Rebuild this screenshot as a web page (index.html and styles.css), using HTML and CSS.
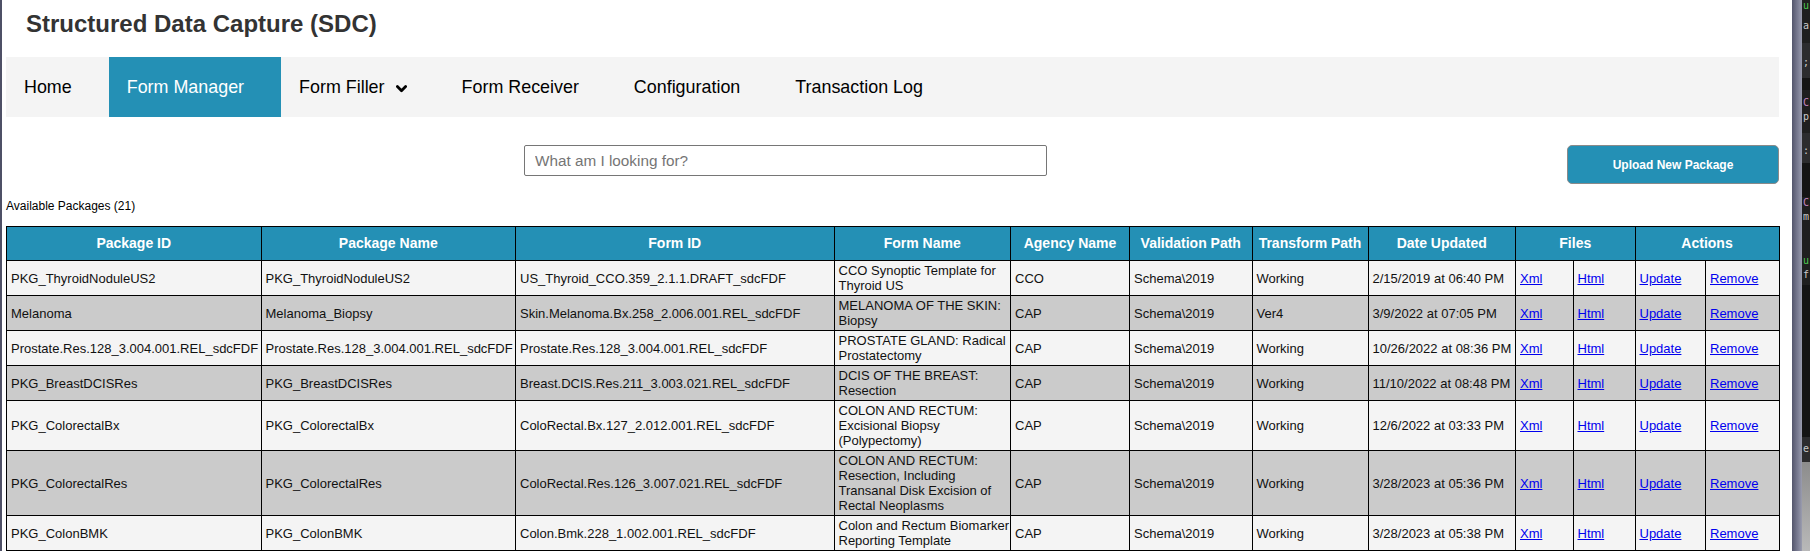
FILE: index.html
```html
<!DOCTYPE html>
<html lang="en">
<head>
<meta charset="utf-8">
<title>Structured Data Capture (SDC)</title>
<link rel="stylesheet" href="styles.css">
</head>
<body>
<div class="screen">
  <div class="edge"></div>
  <div class="page">
    <h1 class="title">Structured Data Capture (SDC)</h1>
    <nav class="nav">
      <a class="nav-item">Home</a>
      <a class="nav-item active">Form Manager</a>
      <a class="nav-item">Form Filler
        <svg class="chev" width="11" height="8" viewBox="0 0 11 8"><polyline points="1.4,1.6 5.5,5.7 9.6,1.6" fill="none" stroke="#000" stroke-width="2.8" stroke-linecap="round" stroke-linejoin="round"/></svg>
      </a>
      <a class="nav-item">Form Receiver</a>
      <a class="nav-item">Configuration</a>
      <a class="nav-item">Transaction Log</a>
    </nav>
    <div class="toolbar">
      <input class="search" type="text" placeholder="What am I looking for?">
      <button class="upload" type="button">Upload New Package</button>
    </div>
    <div class="count">Available Packages (21)</div>
    <table class="packages">
      <colgroup>
        <col class="c-pid"><col class="c-pname"><col class="c-fid"><col class="c-fname">
        <col class="c-agency"><col class="c-valid"><col class="c-trans"><col class="c-date">
        <col class="c-xml"><col class="c-html"><col class="c-upd"><col class="c-rem">
      </colgroup>
      <thead>
        <tr>
          <th>Package ID</th><th>Package Name</th><th>Form ID</th><th>Form Name</th>
          <th>Agency Name</th><th>Validation Path</th><th>Transform Path</th><th>Date Updated</th>
          <th colspan="2">Files</th><th colspan="2">Actions</th>
        </tr>
      </thead>
      <tbody>
        <tr>
          <td>PKG_ThyroidNoduleUS2</td><td>PKG_ThyroidNoduleUS2</td><td>US_Thyroid_CCO.359_2.1.1.DRAFT_sdcFDF</td>
          <td class="fname">CCO Synoptic Template for<br>Thyroid US</td><td>CCO</td><td>Schema\2019</td><td>Working</td><td>2/15/2019 at 06:40 PM</td>
          <td><a href="#">Xml</a></td><td><a href="#">Html</a></td><td><a href="#">Update</a></td><td><a href="#">Remove</a></td>
        </tr>
        <tr>
          <td>Melanoma</td><td>Melanoma_Biopsy</td><td>Skin.Melanoma.Bx.258_2.006.001.REL_sdcFDF</td>
          <td class="fname">MELANOMA OF THE SKIN:<br>Biopsy</td><td>CAP</td><td>Schema\2019</td><td>Ver4</td><td>3/9/2022 at 07:05 PM</td>
          <td><a href="#">Xml</a></td><td><a href="#">Html</a></td><td><a href="#">Update</a></td><td><a href="#">Remove</a></td>
        </tr>
        <tr>
          <td>Prostate.Res.128_3.004.001.REL_sdcFDF</td><td>Prostate.Res.128_3.004.001.REL_sdcFDF</td><td>Prostate.Res.128_3.004.001.REL_sdcFDF</td>
          <td class="fname">PROSTATE GLAND: Radical<br>Prostatectomy</td><td>CAP</td><td>Schema\2019</td><td>Working</td><td>10/26/2022 at 08:36 PM</td>
          <td><a href="#">Xml</a></td><td><a href="#">Html</a></td><td><a href="#">Update</a></td><td><a href="#">Remove</a></td>
        </tr>
        <tr>
          <td>PKG_BreastDCISRes</td><td>PKG_BreastDCISRes</td><td>Breast.DCIS.Res.211_3.003.021.REL_sdcFDF</td>
          <td class="fname">DCIS OF THE BREAST:<br>Resection</td><td>CAP</td><td>Schema\2019</td><td>Working</td><td>11/10/2022 at 08:48 PM</td>
          <td><a href="#">Xml</a></td><td><a href="#">Html</a></td><td><a href="#">Update</a></td><td><a href="#">Remove</a></td>
        </tr>
        <tr>
          <td>PKG_ColorectalBx</td><td>PKG_ColorectalBx</td><td>ColoRectal.Bx.127_2.012.001.REL_sdcFDF</td>
          <td class="fname">COLON AND RECTUM:<br>Excisional Biopsy<br>(Polypectomy)</td><td>CAP</td><td>Schema\2019</td><td>Working</td><td>12/6/2022 at 03:33 PM</td>
          <td><a href="#">Xml</a></td><td><a href="#">Html</a></td><td><a href="#">Update</a></td><td><a href="#">Remove</a></td>
        </tr>
        <tr>
          <td>PKG_ColorectalRes</td><td>PKG_ColorectalRes</td><td>ColoRectal.Res.126_3.007.021.REL_sdcFDF</td>
          <td class="fname">COLON AND RECTUM:<br>Resection, Including<br>Transanal Disk Excision of<br>Rectal Neoplasms</td><td>CAP</td><td>Schema\2019</td><td>Working</td><td>3/28/2023 at 05:36 PM</td>
          <td><a href="#">Xml</a></td><td><a href="#">Html</a></td><td><a href="#">Update</a></td><td><a href="#">Remove</a></td>
        </tr>
        <tr>
          <td>PKG_ColonBMK</td><td>PKG_ColonBMK</td><td>Colon.Bmk.228_1.002.001.REL_sdcFDF</td>
          <td class="fname">Colon and Rectum Biomarker<br>Reporting Template</td><td>CAP</td><td>Schema\2019</td><td>Working</td><td>3/28/2023 at 05:38 PM</td>
          <td><a href="#">Xml</a></td><td><a href="#">Html</a></td><td><a href="#">Update</a></td><td><a href="#">Remove</a></td>
        </tr>
      </tbody>
    </table>
  </div>
  <div class="desk">
    <div class="desk-bar"></div>
    <div class="desk-code">
      <div class="ln l10 green">u</div>
      <div class="ln l10"></div>
      <div class="ln l12 grey">a</div>
      <div class="ln l11"></div>
      <div class="ln l35 blk2 grey">;</div>
      <div class="ln l12 blk0"></div>
      <div class="ln l7"></div>
      <div class="ln l14 purple">C</div>
      <div class="ln l16 grey">p</div>
      <div class="ln l6"></div>
      <div class="ln l30 blk2 grey">:</div>
      <div class="ln l34 blk0"></div>
      <div class="ln l14 purple">C</div>
      <div class="ln l16 grey">m</div>
      <div class="ln l28"></div>
      <div class="ln l14 green">u</div>
      <div class="ln l16 grey">f</div>
      <div class="ln l152 blk0"></div>
      <div class="ln l25 blk2 grey">e</div>
      <div class="ln lrest light"></div>
    </div>
  </div>
</div>
</body>
</html>
```
FILE: styles.css
```css
* { box-sizing: border-box; }

html, body {
  margin: 0;
  padding: 0;
  background: #fff;
}

body {
  font-family: "Liberation Sans", Arial, Helvetica, sans-serif;
  color: #111;
}

.screen {
  display: flex;
  height: 551px;
  overflow: hidden;
}

.edge {
  flex: none;
  width: 2px;
  background: #4e5066;
}

.page {
  flex: 1;
  min-width: 0;
  padding: 0 13px 0 4px;
}

.title {
  margin: 10px 0 0;
  padding-left: 20px;
  font-size: 24px;
  line-height: 28px;
  font-weight: bold;
  color: #333;
}

/* navigation */
.nav {
  margin-top: 19px;
  display: flex;
  height: 60px;
  background: #f4f4f4;
}

.nav-item {
  display: flex;
  align-items: center;
  gap: 11px;
  padding: 0 37px 0 18px;
  font-size: 17.9px;
  color: #000;
  text-decoration: none;
  white-space: nowrap;
}

.nav-item.active {
  background: #2490b5;
  color: #fff;
}

.chev {
  display: block;
  margin-top: 4px;
}

/* toolbar */
.toolbar {
  margin-top: 28px;
  display: flex;
  align-items: flex-start;
}

.search {
  margin-left: 518px;
  width: 523px;
  height: 31px;
  padding: 0 10px;
  border: 1px solid #767676;
  border-radius: 2px;
  font-family: "Liberation Sans", Arial, sans-serif;
  font-size: 15.3px;
  color: #111;
  background: #fff;
}

.search::placeholder {
  color: #757575;
}

.upload {
  margin-left: auto;
  width: 212px;
  height: 39px;
  border: 1px solid #8a8a8a;
  border-radius: 5px;
  background: #2490b5;
  color: #fff;
  font-family: "Liberation Sans", Arial, sans-serif;
  font-size: 12px;
  font-weight: bold;
  padding: 0;
}

.count {
  margin-top: 16px;
  font-size: 12px;
  line-height: 13px;
  color: #000;
}

/* table */
.packages {
  margin-top: 13px;
  width: 1773px;
  table-layout: fixed;
  border-collapse: collapse;
}

.c-pid { width: 254.5px; }
.c-pname { width: 254.5px; }
.c-fid { width: 318.5px; }
.c-fname { width: 176.5px; }
.c-agency { width: 119px; }
.c-valid { width: 122.5px; }
.c-trans { width: 116px; }
.c-date { width: 147.5px; }
.c-xml { width: 57.5px; }
.c-html { width: 62px; }
.c-upd { width: 70.5px; }
.c-rem { width: 73.5px; }

.packages th {
  background: #2490b5;
  color: #fff;
  font-size: 14px;
  font-weight: bold;
  line-height: 17px;
  padding: 8px 4px;
  border: 1px solid #000;
  text-align: center;
  white-space: nowrap;
}

.packages td {
  font-size: 13px;
  line-height: 15px;
  padding: 2px 4px;
  border: 1px solid #000;
  vertical-align: middle;
  color: #111;
  white-space: nowrap;
}

.packages td.fname {
  padding-right: 0;
  overflow: visible;
}

.packages tbody tr:nth-child(odd) td { background: #f4f4f4; }
.packages tbody tr:nth-child(even) td { background: #cbcbcb; }

.packages a {
  color: #0000ee;
  text-decoration: underline;
}

/* desktop strip at the right edge */
.desk {
  flex: none;
  width: 18px;
  display: flex;
}

.desk-bar {
  width: 10px;
  background: linear-gradient(to right, #54566c, #7c7e94 60%, #9a9cae);
}

.desk-code {
  width: 8px;
  overflow: hidden;
  background: #1f1f1f;
  font-family: "DejaVu Sans Mono", monospace;
  font-size: 10px;
  display: flex;
  flex-direction: column;
}

.ln {
  flex: none;
  line-height: 12px;
  white-space: nowrap;
  overflow: hidden;
  padding-left: 1px;
}

.l6 { height: 6px; }
.l7 { height: 7px; }
.l10 { height: 10px; }
.l11 { height: 11px; }
.l12 { height: 12px; }
.l14 { height: 14px; }
.l16 { height: 16px; }
.l25 { height: 25px; padding-top: 6px; }
.l28 { height: 28px; }
.l30 { height: 30px; padding-top: 12px; }
.l34 { height: 34px; }
.l35 { height: 35px; padding-top: 14px; }
.l152 { height: 152px; }
.lrest { flex: 1; }

.blk0 { background: #141414; }
.blk2 { background: #2c2c2e; }
.light { background: linear-gradient(#8c8c8c, #b9b9b9); }
.green { color: #4ec94e; }
.grey { color: #c8c8c8; }
.purple { color: #c586c0; }
```
